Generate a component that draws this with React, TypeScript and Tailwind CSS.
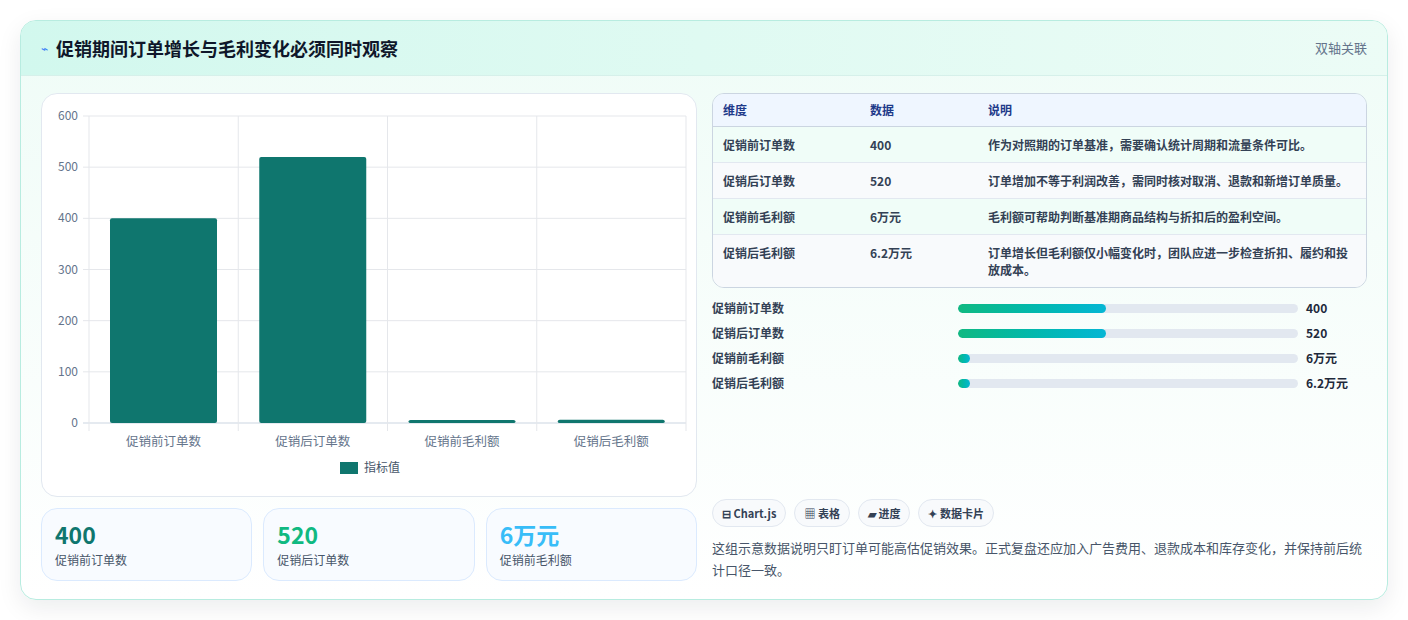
const FONT = { fontFamily: '"Noto Sans CJK SC", "Noto Sans", sans-serif' }

const rows = [
  { k: '促销前订单数', v: '400', d: '作为对照期的订单基准，需要确认统计周期和流量条件可比。' },
  { k: '促销后订单数', v: '520', d: '订单增加不等于利润改善，需同时核对取消、退款和新增订单质量。' },
  { k: '促销前毛利额', v: '6万元', d: '毛利额可帮助判断基准期商品结构与折扣后的盈利空间。' },
  { k: '促销后毛利额', v: '6.2万元', d: '订单增长但毛利额仅小幅变化时，团队应进一步检查折扣、履约和投放成本。' },
]

const bars = [
  { k: '促销前订单数', v: '400', w: 148 },
  { k: '促销后订单数', v: '520', w: 148 },
  { k: '促销前毛利额', v: '6万元', w: 12 },
  { k: '促销后毛利额', v: '6.2万元', w: 12 },
]

function Chart() {
  const x0 = 47, x1 = 644, yTop = 22, yBot = 329
  const unit = (yBot - yTop) / 600
  const cw = (x1 - x0) / 4
  const vals = [400, 520, 6, 6.2]
  return (
    <svg width="656" height="403" className="block">
      {[0, 100, 200, 300, 400, 500, 600].map((t) => {
        const y = yBot - t * unit
        return (
          <g key={t}>
            <line x1={x0 - 6} x2={x1} y1={y} y2={y} stroke={t === 0 ? '#cbd5e1' : '#e5e7eb'} />
            <text x={36} y={y + 4} textAnchor="end" fontSize="12" fill="#64748b">{t}</text>
          </g>
        )
      })}
      {[0, 1, 2, 3, 4].map((i) => (
        <line key={i} x1={x0 + i * cw} x2={x0 + i * cw} y1={yTop} y2={yBot + 8} stroke="#e5e7eb" />
      ))}
      {vals.map((v, i) => {
        const h = Math.max(v * unit, 3)
        return <rect key={i} x={x0 + i * cw + 21} y={yBot - h} width={107} height={h} rx={2} fill="#0f766e" />
      })}
      {bars.map((b, i) => (
        <text key={b.k} x={x0 + i * cw + cw / 2} y={352} textAnchor="middle" fontSize="12.5" fill="#64748b">{b.k}</text>
      ))}
      <rect x={298} y={368} width={18} height={12} fill="#0f766e" />
      <text x={322} y={378} fontSize="12" fill="#475569">指标值</text>
    </svg>
  )
}

export default function App() {
  return (
    <div className="min-h-[620px] bg-white p-5" style={FONT}>
      <div className="rounded-2xl border border-[#b8ece0] bg-gradient-to-b from-[#effcf7] to-white shadow-[0_8px_24px_rgba(15,23,42,0.08)] overflow-hidden">
        <div className="h-[55px] flex items-center justify-between px-5 border-b border-[#d6f0ea] bg-gradient-to-r from-[#d2f8ee] to-[#ecfcf6]">
          <div className="flex items-center gap-2">
            <span className="text-[12px] text-[#3b82f6]">⌁</span>
            <span className="text-[18px] font-bold text-[#0f172a]">促销期间订单增长与毛利变化必须同时观察</span>
          </div>
          <span className="text-[13px] text-[#64748b]">双轴关联</span>
        </div>
        <div className="flex gap-[15px] px-5 pt-[17px] pb-[18px]">
          <div className="w-[656px] flex flex-col gap-[11px]">
            <div className="h-[404px] rounded-2xl border border-[#e2e8f0] bg-white overflow-hidden">
              <Chart />
            </div>
            <div className="flex gap-[11px]">
              {[
                { v: '400', l: '促销前订单数', c: 'text-[#0f766e]' },
                { v: '520', l: '促销后订单数', c: 'text-[#10b981]' },
                { v: '6万元', l: '促销前毛利额', c: 'text-[#38bdf8]' },
              ].map((s) => (
                <div key={s.l} className="flex-1 h-[73px] rounded-2xl border border-[#dbeafe] bg-[#f8fbff] px-[13px] pt-[10px]">
                  <div className={`text-[23px] font-bold leading-[30px] ${s.c}`}>{s.v}</div>
                  <div className="text-[12px] text-[#475569] mt-[2px]">{s.l}</div>
                </div>
              ))}
            </div>
          </div>
          <div className="w-[657px] flex flex-col">
            <div className="rounded-xl border border-[#cbd5e1] overflow-hidden text-[12px]">
              <div className="flex h-[33px] items-center bg-[#eff6ff] border-b border-[#cbd5e1] font-bold text-[#1e3a8a]">
                <div className="w-[157px] pl-[10px]">维度</div>
                <div className="w-[118px]">数据</div>
                <div className="flex-1">说明</div>
              </div>
              {rows.map((r, i) => (
                <div key={r.k} className={`flex py-[9px] font-bold text-[#334155] ${i < 3 ? 'border-b border-[#e2e8f0]' : ''} ${i % 2 === 0 ? 'bg-[#f0fdf8]' : 'bg-[#f8fafc]'}`}>
                  <div className="w-[157px] pl-[10px] leading-[17px]">{r.k}</div>
                  <div className="w-[118px] leading-[17px]">{r.v}</div>
                  <div className="flex-1 pr-3 leading-[17px]">{r.d}</div>
                </div>
              ))}
            </div>
            <div className="mt-[11px] flex flex-col gap-[7px]">
              {bars.map((b) => (
                <div key={b.k} className="flex items-center h-[18px] text-[12px] font-bold text-[#334155]">
                  <div className="w-[246px]">{b.k}</div>
                  <div className="w-[340px] h-[9px] rounded-full bg-[#e2e8f0] overflow-hidden">
                    <div className="h-full rounded-full bg-gradient-to-r from-[#10b981] to-[#06b6d4]" style={{ width: b.w }} />
                  </div>
                  <div className="pl-2 text-[#1e293b]">{b.v}</div>
                </div>
              ))}
            </div>
            <div className="flex-1" />
            <div className="flex gap-2 text-[11px] font-bold text-[#334155]">
              {['⊟ Chart.js', '▦ 表格', '▰ 进度', '✦ 数据卡片'].map((t) => (
                <span key={t} className="h-[28px] px-[9px] flex items-center rounded-full border border-[#e2e8f0] bg-[#f8fafc]">{t}</span>
              ))}
            </div>
            <p className="mt-[10px] text-[13px] leading-[22px] text-[#475569]">
              这组示意数据说明只盯订单可能高估促销效果。正式复盘还应加入广告费用、退款成本和库存变化，并保持前后统计口径一致。
            </p>
          </div>
        </div>
      </div>
    </div>
  )
}
